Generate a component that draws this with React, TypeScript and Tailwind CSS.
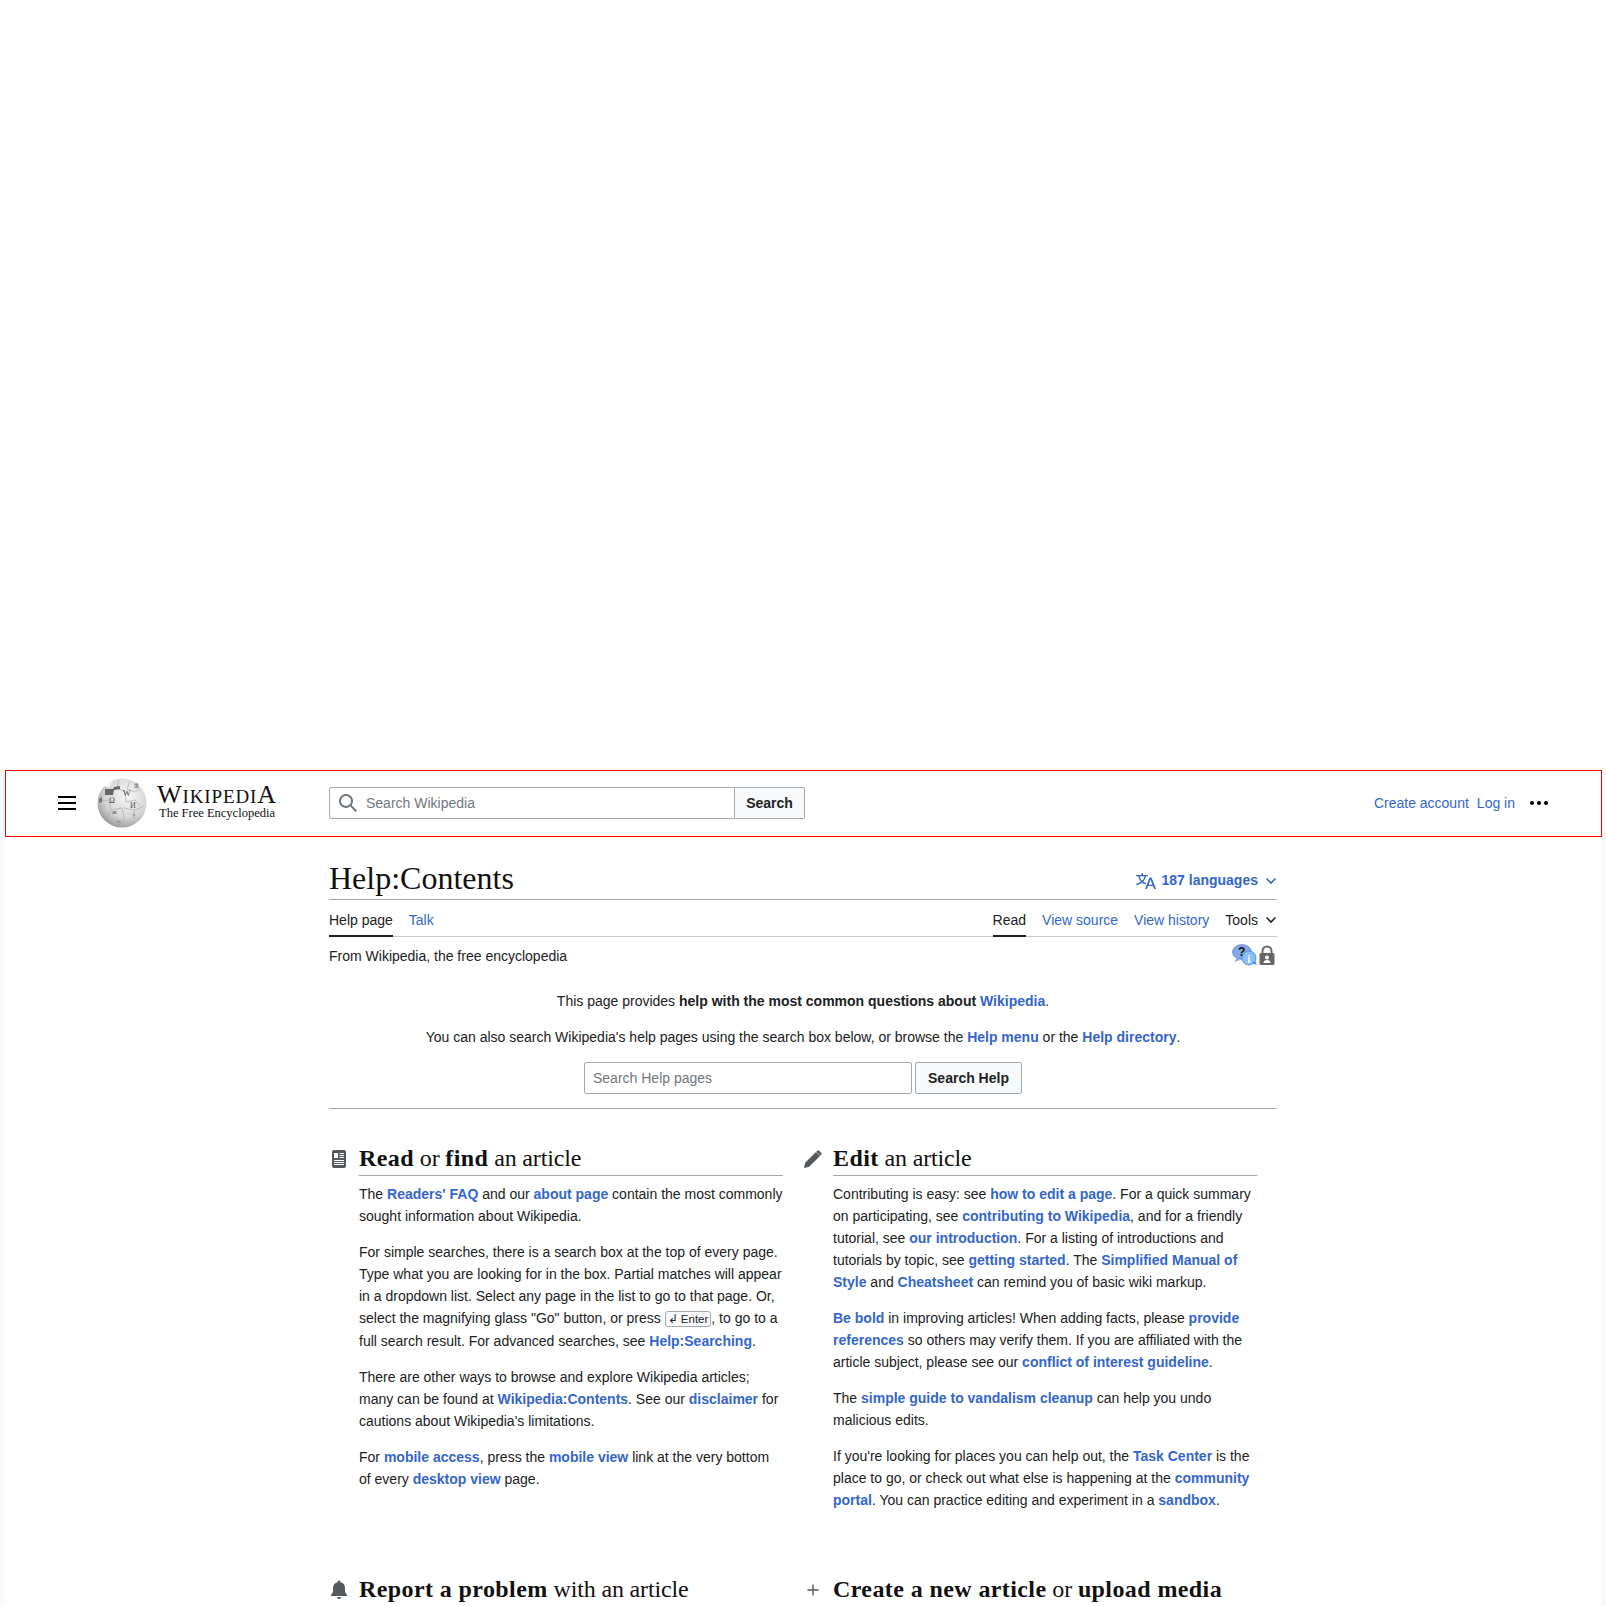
import type { ReactNode } from "react";

const A = ({ children }: { children: ReactNode }) => (
  <a className="font-bold text-[#3366cc]">{children}</a>
);

const B = ({ children }: { children: ReactNode }) => (
  <b className="tracking-[0.4px]">{children}</b>
);

function Globe() {
  return (
    <svg viewBox="0 0 50 50" className="h-[50px] w-[50px] shrink-0">
      <defs>
        <radialGradient id="globe" cx="0.6" cy="0.35" r="0.72">
          <stop offset="0" stopColor="#f6f6f6" />
          <stop offset="0.62" stopColor="#d6d6d6" />
          <stop offset="1" stopColor="#929292" />
        </radialGradient>
      </defs>
      <circle cx="25" cy="25" r="24.5" fill="url(#globe)" />
      <path d="M8 10l5-7M22 2l-2 8 8 4 1 10 9-2 5 6M3 22l9 1 2 9-4 8M14 32l11-2 2 10-4 9M27 30l10 2 1 9M38 32l9-4M33 3l-3 8 8 3 5-3"
        fill="none" stroke="#aeaeae" strokeWidth="0.7" />
      <path d="M8 11h8l1-2 6-1v3l-6 1-1 5H8z" fill="#666" />
      <path d="M6 8l6-5 4-1-4 7z" fill="#fafafa" />
      <path d="M2 21l3-2v5l-3 1z" fill="#777" />
      <text x="12" y="25" fontFamily="Liberation Serif, serif" fontSize="8" fill="#444">Ω</text>
      <text x="26" y="18" fontFamily="Liberation Serif, serif" fontSize="8" fill="#444">W</text>
      <text x="33" y="30" fontFamily="Liberation Serif, serif" fontSize="8" fill="#555">И</text>
      <text x="15" y="36" fontFamily="Liberation Serif, serif" fontSize="7" fill="#555">ж</text>
      <text x="19" y="46" fontFamily="Noto Sans CJK JP, sans-serif" fontSize="5" fill="#777">ウ</text>
      <text x="35" y="40" fontFamily="Liberation Serif, serif" fontSize="6" fill="#555">?</text>
      <text x="37" y="9" fontFamily="Noto Sans CJK SC, sans-serif" fontSize="5" fill="#555">维</text>
    </svg>
  );
}

function Header() {
  return (
    <header className="flex h-[67px] w-[1597px] items-center border border-[#ff0000] bg-white pb-[2px]">
      <div className="ml-[52px] flex w-[18px] flex-col gap-[4px]">
        <span className="h-[2px] bg-black" />
        <span className="h-[2px] bg-black" />
        <span className="h-[2px] bg-black" />
      </div>
      <div className="ml-[21px] flex items-center">
        <Globe />
        <div className="ml-[10px] flex w-[120px] flex-col items-center font-['Liberation_Serif',serif] text-[#111]">
          <div className="text-[19px] leading-[20px] tracking-[0.9px]">
            <span className="text-[26px]">W</span>IKIPEDI<span className="text-[26px]">A</span>
          </div>
          <div className="-mt-[1px] text-[12.5px] leading-[14px]">The Free Encyclopedia</div>
        </div>
      </div>
      <div className="ml-[52px] flex h-[32px]">
        <div className="flex w-[406px] items-center rounded-l-[2px] border border-[#a2a9b1] pl-[8px]">
          <svg viewBox="0 0 20 20" className="h-[20px] w-[20px]" fill="#72777d">
            <path d="M12.2 13.6a7 7 0 1 1 1.4-1.4l5.4 5.4-1.4 1.4zM3 8a5 5 0 1 0 10 0A5 5 0 0 0 3 8" />
          </svg>
          <span className="ml-[8px] pt-[2px] text-[#72777d]">Search Wikipedia</span>
        </div>
        <div className="flex w-[70px] items-center justify-center rounded-r-[2px] border border-l-0 border-[#a2a9b1] bg-[#f8f9fa] pt-[2px] font-bold text-[#202122]">
          Search
        </div>
      </div>
      <div className="ml-auto mr-[53px] flex items-center text-[#3366cc]">
        <a className="pt-[2px]">Create account</a>
        <a className="ml-[8px] pt-[2px]">Log in</a>
        <div className="ml-[15px] flex gap-[3px]">
          <span className="h-[4px] w-[4px] rounded-full bg-black" />
          <span className="h-[4px] w-[4px] rounded-full bg-black" />
          <span className="h-[4px] w-[4px] rounded-full bg-black" />
        </div>
      </div>
    </header>
  );
}

const Chevron = ({ color }: { color: string }) => (
  <svg viewBox="0 0 12 8" className="h-[8px] w-[12px]">
    <path d="M1.5 1.5L6 6l4.5-4.5" fill="none" stroke={color} strokeWidth="1.6" />
  </svg>
);

function Titlebar() {
  return (
    <>
      <div className="flex h-[49px] items-end justify-between border-b border-[#a2a9b1] pb-[1px]">
        <h1 className="font-['Liberation_Serif',serif] text-[32px] leading-[40px] text-[#111]">Help:Contents</h1>
        <div className="mb-[7px] flex items-center font-bold text-[#3366cc]">
          <svg viewBox="0 0 20 20" className="h-[20px] w-[20px]" fill="#3366cc">
            <path d="M20 18h-1.44a.6.6 0 0 1-.4-.12.8.8 0 0 1-.23-.31L17 15h-5l-1 2.54a.8.8 0 0 1-.22.3.6.6 0 0 1-.4.14H9l4.55-11.47h1.89zm-3.53-4.31L14.89 9.5a12 12 0 0 1-.39-1.24q-.09.37-.19.69l-.19.56-1.58 4.19zm-6.3-1.58a13.4 13.4 0 0 1-2.91-1.41 11.46 11.46 0 0 0 2.81-5.37H12V4H7.31a4 4 0 0 0-.2-.56C6.87 2.79 6.6 2 6.6 2l-1.47.5s.4.89.6 1.5H0v1.33h2.15A11.23 11.23 0 0 0 5 10.7a17.2 17.2 0 0 1-5 2.1q.56.82.87 1.38a23.3 23.3 0 0 0 5.22-2.51 15.6 15.6 0 0 0 3.56 1.77zM3.63 5.33h4.91a8.1 8.1 0 0 1-2.45 4.45 9.1 9.1 0 0 1-2.46-4.45" />
          </svg>
          <span className="ml-[6px]">187 languages</span>
          <span className="ml-[7px] flex"><Chevron color="#3366cc" /></span>
        </div>
      </div>
      <div className="flex h-[37px] justify-between border-b border-[#c8ccd1]">
        <div className="flex">
          <div className="flex h-[37px] items-center border-b-2 border-[#202122] pt-[5px] text-[#202122]">Help page</div>
          <a className="ml-[16px] flex h-[37px] items-center border-b-2 border-transparent pt-[5px] text-[#3366cc]">Talk</a>
        </div>
        <div className="flex">
          <div className="flex h-[37px] items-center border-b-2 border-[#202122] pt-[5px] text-[#202122]">Read</div>
          <a className="ml-[16px] flex h-[37px] items-center border-b-2 border-transparent pt-[5px] text-[#3366cc]">View source</a>
          <a className="ml-[16px] flex h-[37px] items-center border-b-2 border-transparent pt-[5px] text-[#3366cc]">View history</a>
          <div className="ml-[16px] flex h-[37px] items-center border-b-2 border-transparent pt-[5px] text-[#202122]">
            Tools
            <span className="ml-[7px] flex"><Chevron color="#202122" /></span>
          </div>
        </div>
      </div>
      <div className="flex h-[38px] items-center justify-between text-[#202122]">
        <span>From Wikipedia, the free encyclopedia</span>
        <div className="mb-[2px] mr-[2px] flex items-center">
          <svg viewBox="0 0 26 22" className="h-[22px] w-[26px]">
            <ellipse cx="10" cy="8" rx="9.5" ry="7.5" fill="#86a8e8" stroke="#4f73c0" strokeWidth="0.6" />
            <path d="M5 14l-3 4 6-2z" fill="#86a8e8" />
            <circle cx="17" cy="14" r="7" fill="#8cc0f4" stroke="#3f86dc" strokeWidth="0.8" />
            <path d="M20 19l5 2-2-4z" fill="#3f86dc" />
            <text x="6" y="12" fontSize="12" fontWeight="bold" fontFamily="Liberation Sans, sans-serif" fill="#111">?</text>
            <text x="15.5" y="19" fontSize="10" fontWeight="bold" fontFamily="Liberation Sans, sans-serif" fill="#fff">i</text>
          </svg>
          <svg viewBox="0 0 16 20" className="ml-[1px] h-[20px] w-[16px]">
            <path d="M3.5 9V6a4.5 4.5 0 0 1 9 0v3" fill="none" stroke="#666" strokeWidth="2" />
            <rect x="0.5" y="8" width="15" height="12" rx="1.5" fill="#666" />
            <circle cx="8" cy="12.5" r="2" fill="#fff" />
            <path d="M4.5 18c0-2 1.5-3 3.5-3s3.5 1 3.5 3z" fill="#fff" />
          </svg>
        </div>
      </div>
    </>
  );
}

function Intro() {
  return (
    <div className="mt-[15px] flex flex-col items-center border-b border-[#a2a9b1] pb-[14px] text-[#202122]">
      <p className="leading-[22.4px]">
        This page provides <b>help with the most common questions about</b> <A>Wikipedia</A>.
      </p>
      <p className="mt-[14px] leading-[22.4px]">
        You can also search Wikipedia's help pages using the search box below, or browse the <A>Help menu</A> or the <A>Help directory</A>.
      </p>
      <div className="mt-[13px] flex h-[32px]">
        <div className="flex w-[328px] items-center rounded-[2px] border border-[#a2a9b1] pl-[8px] pt-[2px] text-[#72777d]">Search Help pages</div>
        <div className="ml-[3px] flex w-[107px] items-center justify-center rounded-[2px] border border-[#a2a9b1] bg-[#f8f9fa] pt-[2px] font-bold">Search Help</div>
      </div>
    </div>
  );
}

function Heading({ icon, children }: { icon: ReactNode; children: ReactNode }) {
  return (
    <div className="relative pl-[30px]">
      <div className="absolute left-0 top-[6px] flex h-[20px] w-[20px] items-center justify-center">{icon}</div>
      <h2 className="border-b border-[#a2a9b1] pb-[1px] font-['Liberation_Serif',serif] text-[24px] leading-[31px] tracking-[-0.15px] text-[#111]">
        {children}
      </h2>
    </div>
  );
}

const Para = ({ children }: { children: ReactNode }) => (
  <p className="mb-[14px] leading-[22px] text-[#202122]">{children}</p>
);

function ReadColumn() {
  return (
    <div className="w-[454px]">
      <Heading
        icon={
          <svg viewBox="0 0 14 18" className="h-[18px] w-[14px]">
            <rect width="14" height="18" rx="2" fill="#54595d" />
            <path d="M2 3h4v5H2z M7.5 3H12v1H7.5z M7.5 5H12v1H7.5z M7.5 7H12v1H7.5z M2 10h10v1H2z M2 12h10v1H2z M2 14h10v1H2z" fill="#fff" />
          </svg>
        }
      >
        <B>Read</B> or <B>find</B> an article
      </Heading>
      <div className="mt-[7px] pl-[30px]">
        <Para>The <A>Readers' FAQ</A> and our <A>about page</A> contain the most commonly sought information about Wikipedia.</Para>
        <Para>
          For simple searches, there is a search box at the top of every page. Type what you are looking for in the box. Partial matches will appear in a dropdown list. Select any page in the list to go to that page. Or, select the magnifying glass "Go" button, or press{" "}
          <kbd className="rounded-[3px] border border-[#a2a9b1] bg-[#f8f9fa] px-[2px] py-[1px] font-['Liberation_Sans',sans-serif] text-[11.5px] text-[#202122]">↲ Enter</kbd>, to go to a full search result. For advanced searches, see <A>Help:Searching</A>.
        </Para>
        <Para>There are other ways to browse and explore Wikipedia articles; many can be found at <A>Wikipedia:Contents</A>. See our <A>disclaimer</A> for cautions about Wikipedia's limitations.</Para>
        <Para>For <A>mobile access</A>, press the <A>mobile view</A> link at the very bottom of every <A>desktop view</A> page.</Para>
      </div>
    </div>
  );
}

function EditColumn() {
  return (
    <div className="w-[454px]">
      <Heading
        icon={
          <svg viewBox="0 0 20 20" className="h-[20px] w-[20px]" fill="#54595d">
            <path d="M1 19l1.2-5.2L13 3l4 4L6.2 17.8zM14.2 1.8a1.4 1.4 0 0 1 2 0l2 2a1.4 1.4 0 0 1 0 2l-.9.9-4-4z" />
          </svg>
        }
      >
        <B>Edit</B> an article
      </Heading>
      <div className="mt-[7px] pl-[30px]">
        <Para>Contributing is easy: see <A>how to edit a page</A>. For a quick summary on participating, see <A>contributing to Wikipedia</A>, and for a friendly tutorial, see <A>our introduction</A>. For a listing of introductions and tutorials by topic, see <A>getting started</A>. The <A>Simplified Manual of Style</A> and <A>Cheatsheet</A> can remind you of basic wiki markup.</Para>
        <Para><A>Be bold</A> in improving articles! When adding facts, please <A>provide references</A> so others may verify them. If you are affiliated with the article subject, please see our <A>conflict of interest guideline</A>.</Para>
        <Para>The <A>simple guide to vandalism cleanup</A> can help you undo malicious edits.</Para>
        <Para>If you're looking for places you can help out, the <A>Task Center</A> is the place to go, or check out what else is happening at the <A>community portal</A>. You can practice editing and experiment in a <A>sandbox</A>.</Para>
      </div>
    </div>
  );
}

export default function App() {
  return (
    <div className="h-[1606px] overflow-hidden bg-white pt-[770px] font-['Liberation_Sans',Arial,sans-serif] text-[14px]">
      <div className="h-[836px] bg-[#f8f9fa] px-[5px]">
        <Header />
        <main className="h-full bg-white px-[324px] pt-[14px]">
          <Titlebar />
          <Intro />
          <div className="mt-[34px] flex gap-[20px]">
            <ReadColumn />
            <EditColumn />
          </div>
          <div className="mt-[49px] flex gap-[20px]">
            <div className="w-[454px]">
              <Heading
                icon={
                  <svg viewBox="0 0 20 20" className="h-[20px] w-[20px]" fill="#54595d">
                    <path d="M16 12V8a6 6 0 0 0-4.5-5.8V2a1.5 1.5 0 0 0-3 0v.2A6 6 0 0 0 4 8v4l-2 3v1h16v-1zM8 17a2 2 0 0 0 4 0z" />
                  </svg>
                }
              >
                <B>Report a problem</B> with an article
              </Heading>
            </div>
            <div className="w-[454px]">
              <Heading
                icon={
                  <svg viewBox="0 0 20 20" className="h-[14px] w-[14px]" fill="#54595d">
                    <path d="M9 2h2v7h7v2h-7v7H9v-7H2V9h7z" />
                  </svg>
                }
              >
                <B>Create a new article</B> or <B>upload media</B>
              </Heading>
            </div>
          </div>
        </main>
      </div>
    </div>
  );
}
